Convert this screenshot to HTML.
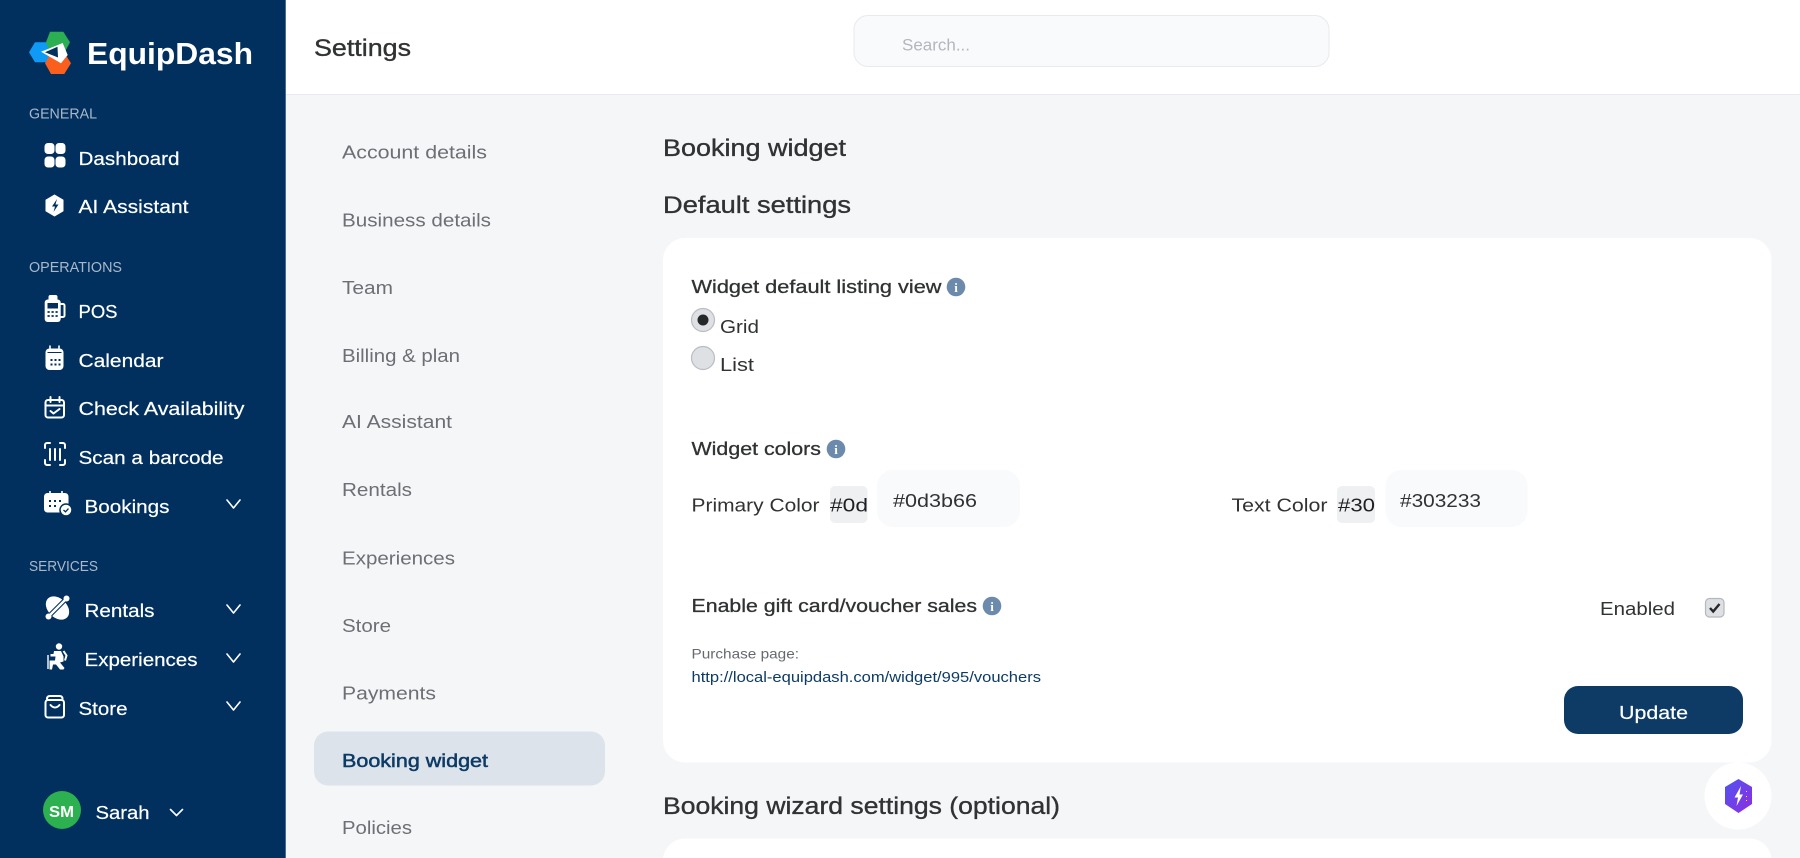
<!DOCTYPE html>
<html lang="en"><head><meta charset="utf-8"><title>Settings</title>
<style>
html,body{margin:0;padding:0;width:1800px;height:858px;overflow:hidden;background:#f5f6f8}
svg{display:block}
text{font-family:"Liberation Sans","DejaVu Sans",sans-serif}
.n{fill:#fff;font-size:18.5px;stroke:#fff;stroke-width:.2}
.h{fill:#a9b8c9;font-size:14.5px}
.m{fill:#6c6f74;font-size:18.5px}
.d{fill:#303233;font-size:18.5px}
.t{fill:#303233;font-size:18.5px;stroke:#303233;stroke-width:.3}
.g{fill:#303233;font-size:24px;stroke:#303233;stroke-width:.35}
.c{fill:none;stroke:#fff;stroke-width:1.6;stroke-linecap:round;stroke-linejoin:round}
.i{fill:none;stroke:#fff;stroke-width:2;stroke-linecap:round;stroke-linejoin:round}
.b{fill:#6c8aab}
</style></head><body>
<svg xmlns="http://www.w3.org/2000/svg" width="1800" height="858" viewBox="0 0 1800 858">
<defs><linearGradient id="pg" x1="0" y1="0" x2="1" y2="1"><stop offset="0" stop-color="#4f55f0"/><stop offset="1" stop-color="#8f2be0"/></linearGradient></defs>
<rect width="1800" height="858" fill="#f5f6f8"/>
<!-- header -->
<rect x="285" y="0" width="1515" height="94" fill="#fff"/>
<rect x="285" y="94" width="1515" height="1" fill="#e8eaee"/>
<text x="314" y="56" textLength="97" lengthAdjust="spacingAndGlyphs" class="g">Settings</text>
<rect x="854" y="15.500" width="475" height="51" rx="14" fill="#f9fafb" stroke="#e8eaee"/>
<text x="902" y="50.500" textLength="68" lengthAdjust="spacingAndGlyphs" font-size="17" fill="#b3b6bd">Search...</text>
<!-- sidebar -->
<rect x="0" y="0" width="285" height="858" fill="#01305f"/>
<rect x="285" y="0" width="1" height="858" fill="#4a6c94"/>
<!-- logo -->
<polygon points="29,52.300 35,42.300 49,42.300 56,52.300 49,62.300 35,62.300" fill="#0f9bf5"/>
<polygon points="51,52.700 64.300,52.700 71,63.300 64.300,74 51,74 45,63.300" fill="#fa5f1e"/>
<polygon points="50,31.700 63.300,31.700 70,42.300 64.300,53 50,53 46,42.300" fill="#2cae52"/>
<polygon points="41,51.800 62.700,43 67.700,55 61,63.300" fill="#fff"/>
<polygon points="45,52.300 57.500,46.800 58,57.500" fill="#01305f"/>
<text x="87" y="64" textLength="166" lengthAdjust="spacingAndGlyphs" font-size="31" font-weight="700" fill="#fff">EquipDash</text>
<!-- section labels -->
<text x="29" y="118.500" textLength="68" lengthAdjust="spacingAndGlyphs" class="h">GENERAL</text>
<text x="29" y="272" textLength="93" lengthAdjust="spacingAndGlyphs" class="h">OPERATIONS</text>
<text x="29" y="571" textLength="69" lengthAdjust="spacingAndGlyphs" class="h">SERVICES</text>
<!-- nav text -->
<text x="78.500" y="165" textLength="101" lengthAdjust="spacingAndGlyphs" class="n">Dashboard</text>
<text x="78.500" y="213" textLength="110" lengthAdjust="spacingAndGlyphs" class="n">AI Assistant</text>
<text x="78.500" y="318" textLength="39" lengthAdjust="spacingAndGlyphs" class="n">POS</text>
<text x="78.500" y="367" textLength="85" lengthAdjust="spacingAndGlyphs" class="n">Calendar</text>
<text x="78.500" y="415" textLength="166" lengthAdjust="spacingAndGlyphs" class="n">Check Availability</text>
<text x="78.500" y="464" textLength="145" lengthAdjust="spacingAndGlyphs" class="n">Scan a barcode</text>
<text x="84.500" y="513" textLength="85" lengthAdjust="spacingAndGlyphs" class="n">Bookings</text>
<text x="84.500" y="617" textLength="70" lengthAdjust="spacingAndGlyphs" class="n">Rentals</text>
<text x="84.500" y="666" textLength="113" lengthAdjust="spacingAndGlyphs" class="n">Experiences</text>
<text x="78.500" y="715" textLength="49" lengthAdjust="spacingAndGlyphs" class="n">Store</text>
<!-- chevrons -->
<path class="c" d="M227 500l6.500 8 6.500-8M227 605l6.500 8 6.500-8M227 654l6.500 8 6.500-8M227 702l6.500 8 6.500-8M170.500 809.500l6 6 6-6"/>
<!-- dashboard icon -->
<g fill="#fff"><rect x="44.500" y="143" width="10" height="11" rx="3.500"/><rect x="55.500" y="143" width="10" height="11" rx="3.500"/><rect x="44.500" y="156.500" width="10" height="11" rx="3.500"/><rect x="55.500" y="156.500" width="10" height="11" rx="3.500"/></g>
<!-- AI icon -->
<polygon points="54.500,195 63,200 63,211 54.500,216 46,211 46,200" fill="#fff" stroke="#fff" stroke-linejoin="round"/>
<path d="M57 199l-5 7.500h3l-1.500 5.500 5-7.500h-3z" fill="#01305f"/>
<!-- POS icon -->
<rect x="48.500" y="295" width="9" height="6" rx="2" fill="#fff"/>
<rect x="44.700" y="299.500" width="16" height="22.500" rx="3" fill="#fff"/>
<path class="i" d="M61 304h2a1.500 1.500 0 0 1 1.500 1.500v10a1.500 1.500 0 0 1-1.500 1.500h-2" stroke-width="1.500"/>
<rect x="47.500" y="303" width="10.500" height="5.500" fill="#01305f"/>
<path d="M47.500 312h2.200M51.500 312h2.200M55.500 312h2.200M47.500 316h2.200M51.500 316h2.200M55.500 316h2.200" stroke="#01305f" stroke-width="1.700"/>
<!-- Calendar icon -->
<rect x="45.500" y="348.500" width="18" height="21.500" rx="4" fill="#fff"/>
<path d="M50 346v5M59 346v5" stroke="#fff" stroke-width="1.600" stroke-linecap="round"/>
<path d="M50.500 360h2M54.500 360h2M58.500 360h2M50.500 364.500h2M54.500 364.500h2M58.500 364.500h2" stroke="#01305f" stroke-width="2"/>
<path d="M47.500 352.500h14" stroke="#01305f" stroke-width="1"/>
<!-- Check availability icon -->
<rect x="45.500" y="400" width="18.500" height="17.500" rx="2.500" class="i" stroke-width="1.700"/>
<path class="i" stroke-width="1.700" d="M50.500 397v5M59.500 397v5M46 405.500h18M50.500 411l3 2.500 6-4.500"/>
<!-- Scan icon -->
<path class="i" stroke-width="1.700" d="M50 443h-3a2 2 0 0 0-2 2v3M60 443h3a2 2 0 0 1 2 2v3M50 465h-3a2 2 0 0 1-2-2v-3M60 465h3a2 2 0 0 0 2-2v-3M50 449v11M55 449v11M60 449v11"/>
<!-- Bookings icon -->
<rect x="44" y="493" width="24.500" height="19.500" rx="3.500" fill="#fff"/>
<path d="M50 491v3M62 491v3" stroke="#fff" stroke-width="1.600"/>
<path d="M49 501h2M54 501h2M59 501h2M49 506h2M54 506h2" stroke="#01305f" stroke-width="2"/>
<circle cx="66" cy="510" r="6" fill="#fff" stroke="#01305f" stroke-width="1.500"/>
<path d="M63.500 510l2 1.800 3-3.200" fill="none" stroke="#01305f" stroke-width="1.300"/>
<!-- Rentals (kayak) -->
<ellipse cx="57.500" cy="608" rx="13.500" ry="9.500" transform="rotate(45 57.500 608)" fill="#fff"/>
<path d="M66.500 598.500L48.500 616.500" stroke="#01305f" stroke-width="4.500"/>
<path d="M66.500 598.500L48.500 616.500" stroke="#fff" stroke-width="2.400"/>
<circle cx="66.500" cy="598.500" r="3" fill="#fff"/><circle cx="48.500" cy="616.500" r="3" fill="#fff"/>
<!-- Experiences (hiker) -->
<circle cx="59" cy="646.500" r="3.200" fill="#fff"/>
<path d="M54 651h7l2.500 5.500v5l-3.500 1 4.500 5.500-1 1.500h-3.500l-4-5h-3l-1 5h-2.500v-9h5.500l.5-4h-5v-2.500h3z" fill="#fff"/>
<path d="M48 669v-14" fill="none" stroke="#fff" stroke-width="1.400"/>
<path d="M63.500 651l3 4.500-1.500 5" fill="none" stroke="#fff" stroke-width="2"/>
<!-- Store icon -->
<rect x="45.500" y="700" width="18.500" height="17.500" rx="2.500" class="i" stroke-width="1.700"/>
<path class="i" stroke-width="1.700" d="M47 699q0-3 3-3h9.500q3 0 3 3M50.500 705q4.500 5 9 0"/>
<!-- User -->
<circle cx="62" cy="810" r="19" fill="#2db04f"/>
<text x="49" y="817" textLength="25" lengthAdjust="spacingAndGlyphs" font-size="15.500" font-weight="700" fill="#fff">SM</text>
<text x="95.500" y="819" textLength="54" lengthAdjust="spacingAndGlyphs" class="n">Sarah</text>
<!-- settings menu -->
<rect x="314" y="731.500" width="291" height="54" rx="14" fill="#dde3ea"/>
<text x="342" y="158.500" textLength="145" lengthAdjust="spacingAndGlyphs" class="m">Account details</text>
<text x="342" y="226.500" textLength="149" lengthAdjust="spacingAndGlyphs" class="m">Business details</text>
<text x="342" y="294" textLength="51" lengthAdjust="spacingAndGlyphs" class="m">Team</text>
<text x="342" y="362" textLength="118" lengthAdjust="spacingAndGlyphs" class="m">Billing &amp; plan</text>
<text x="342" y="428" textLength="110" lengthAdjust="spacingAndGlyphs" class="m">AI Assistant</text>
<text x="342" y="496" textLength="70" lengthAdjust="spacingAndGlyphs" class="m">Rentals</text>
<text x="342" y="564.500" textLength="113" lengthAdjust="spacingAndGlyphs" class="m">Experiences</text>
<text x="342" y="632" textLength="49" lengthAdjust="spacingAndGlyphs" class="m">Store</text>
<text x="342" y="699.500" textLength="94" lengthAdjust="spacingAndGlyphs" class="m">Payments</text>
<text x="342" y="767" textLength="146" lengthAdjust="spacingAndGlyphs" font-size="18.500" fill="#0d3b66" stroke="#0d3b66" stroke-width=".5">Booking widget</text>
<text x="342" y="834" textLength="70" lengthAdjust="spacingAndGlyphs" class="m">Policies</text>
<!-- main headings -->
<text x="663" y="156" textLength="183" lengthAdjust="spacingAndGlyphs" class="g">Booking widget</text>
<text x="663" y="213" textLength="188" lengthAdjust="spacingAndGlyphs" class="g">Default settings</text>
<!-- card -->
<rect x="663" y="238" width="1108.500" height="524.500" rx="22" fill="#fff"/>
<text x="691.500" y="293" textLength="250" lengthAdjust="spacingAndGlyphs" class="t">Widget default listing view</text>
<circle cx="956" cy="287" r="9.300" class="b"/>
<text x="956" y="292" text-anchor="middle" font-size="13" font-weight="700" fill="#fff" style="font-family:'Liberation Serif',serif">i</text>
<circle cx="703" cy="320" r="11.500" fill="#dee0e3" stroke="#b8bcc4" stroke-width="1.200"/>
<circle cx="703" cy="320" r="5.500" fill="#25272b"/>
<text x="720" y="333" textLength="39" lengthAdjust="spacingAndGlyphs" class="d">Grid</text>
<circle cx="703" cy="358" r="11.500" fill="#dee0e3" stroke="#b8bcc4" stroke-width="1.200"/>
<text x="720" y="371" textLength="34" lengthAdjust="spacingAndGlyphs" class="d">List</text>

<text x="691.500" y="455" textLength="129.500" lengthAdjust="spacingAndGlyphs" class="t">Widget colors</text>
<circle cx="836" cy="449" r="9.300" class="b"/>
<text x="836" y="454" text-anchor="middle" font-size="13" font-weight="700" fill="#fff" style="font-family:'Liberation Serif',serif">i</text>

<text x="691.500" y="511.500" textLength="128" lengthAdjust="spacingAndGlyphs" class="d">Primary Color</text>
<rect x="830" y="486" width="37.500" height="37" rx="5" fill="#eff0f1"/>
<text x="830" y="511.500" textLength="38" lengthAdjust="spacingAndGlyphs" font-size="18.500" fill="#1f2023">#0d</text>
<rect x="877" y="470" width="143" height="57" rx="16" fill="#f9fafb"/>
<text x="893" y="507" textLength="84" lengthAdjust="spacingAndGlyphs" class="d">#0d3b66</text>

<text x="1231.500" y="511.500" textLength="96" lengthAdjust="spacingAndGlyphs" class="d">Text Color</text>
<rect x="1337" y="486" width="38" height="37" rx="5" fill="#eff0f1"/>
<text x="1338" y="511.500" textLength="37" lengthAdjust="spacingAndGlyphs" font-size="18.500" fill="#1f2023">#30</text>
<rect x="1385.500" y="470" width="142" height="57" rx="16" fill="#f9fafb"/>
<text x="1400" y="507" textLength="81" lengthAdjust="spacingAndGlyphs" class="d">#303233</text>

<text x="691.500" y="612" textLength="285.500" lengthAdjust="spacingAndGlyphs" class="t">Enable gift card/voucher sales</text>
<circle cx="992" cy="606" r="9.300" class="b"/>
<text x="992" y="611" text-anchor="middle" font-size="13" font-weight="700" fill="#fff" style="font-family:'Liberation Serif',serif">i</text>
<text x="691.500" y="658.500" textLength="107.500" lengthAdjust="spacingAndGlyphs" font-size="14" fill="#666a70">Purchase page:</text>
<text x="691.500" y="682" textLength="349.500" lengthAdjust="spacingAndGlyphs" font-size="14.500" fill="#0d3b66">http://local-equipdash.com/widget/995/vouchers</text>

<text x="1600" y="615" textLength="75" lengthAdjust="spacingAndGlyphs" class="d">Enabled</text>
<rect x="1705.500" y="598.500" width="18.500" height="18.500" rx="4" fill="#dee0e3" stroke="#b4b8c0" stroke-width="1.200"/>
<path d="M1710 608l3.200 3.500 6.300-7.500" fill="none" stroke="#25272b" stroke-width="2.400"/>
<rect x="1564" y="686" width="179" height="48" rx="14" fill="#0d3b66"/>
<text x="1619" y="719" textLength="69" lengthAdjust="spacingAndGlyphs" class="n">Update</text>

<!-- lower section -->
<text x="663" y="814" textLength="397" lengthAdjust="spacingAndGlyphs" class="g">Booking wizard settings (optional)</text>
<rect x="663" y="838.500" width="1108.500" height="60" rx="22" fill="#fff"/>
<!-- float -->
<circle cx="1738" cy="796" r="33.500" fill="#fff"/>
<polygon points="1738.500,779 1752,787 1752,804 1738.500,813 1725,804 1725,787" fill="url(#pg)"/>
<path d="M1741 786l-6.500 11.500h3.500l-1.500 8.500 6.500-11.500h-3.500z" fill="#fff"/>
<path d="M1746.500 791v1M1746.500 796v1M1746.500 800v1" stroke="#e6d8ff" stroke-width="1"/>
</svg>
</body></html>
